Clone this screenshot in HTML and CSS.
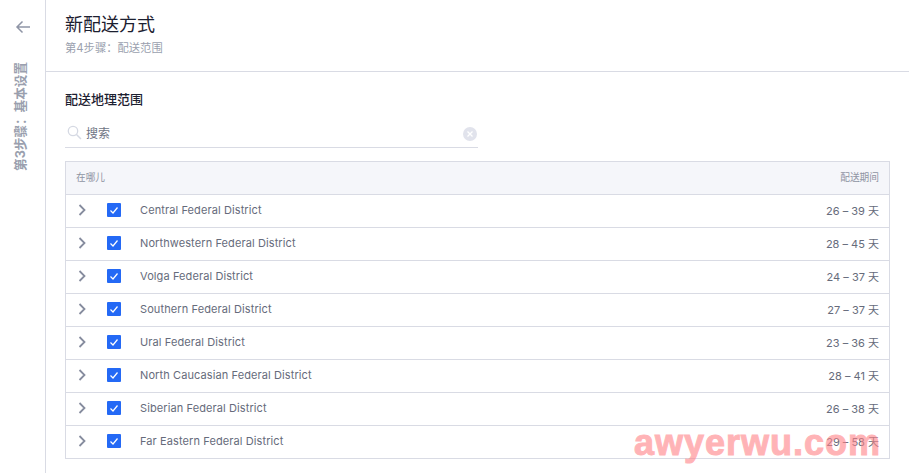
FILE: index.html
```html
<!DOCTYPE html>
<html lang="zh">
<head>
    <meta charset="UTF-8">
    <title>新配送方式</title>
    <link rel="stylesheet" href="styles.css">
</head>
<body>
    <aside class="side">
        <svg class="back" width="16" height="14" viewBox="0 0 16 14"><path d="M15 7H2M7.500 1.500 2 7l5.500 5.500" fill="none" stroke="#8f95a6" stroke-width="1.500"/></svg>
        <div class="step">第3步骤：基本设置</div>
    </aside>
    <main class="main">
        <header class="head">
            <h1 class="title">新配送方式</h1>
            <p class="sub">第4步骤：配送范围</p>
        </header>
        <section class="content">
            <h2 class="label">配送地理范围</h2>
            <div class="search">
                <svg width="15" height="15" viewBox="0 0 15 15"><circle cx="6" cy="6" r="4.700" fill="none" stroke="#d5d9e3" stroke-width="1.300"/><path d="M9.500 9.500 14 14" stroke="#d5d9e3" stroke-width="1.500"/></svg>
                <span class="search_text">搜索</span>
                <svg class="clear" width="14" height="14" viewBox="0 0 14 14"><circle cx="7" cy="7" r="7" fill="#e1e3ec"/><path d="M4.500 4.500l5 5M9.500 4.500l-5 5" stroke="#fff" stroke-width="1.300"/></svg>
            </div>
            <div class="table">
                <div class="row row_head"><span>在哪儿</span><span>配送期间</span></div>
                <div class="row">
                    <svg class="arrow" width="8" height="12" viewBox="0 0 8 12"><path d="M1.500 1 6.500 6l-5 5" fill="none" stroke="#868c9e" stroke-width="1.800"/></svg>
                    <svg class="check" width="14" height="14" viewBox="0 0 14 14"><rect width="14" height="14" rx="1" fill="#2469f5"/><path d="M3.500 7.500 6 10l4.500-5.500" fill="none" stroke="#fff" stroke-width="1.200"/></svg>
                    <span class="name">Central Federal District</span><span class="days">26 – 39 天</span>
                </div>
                <div class="row">
                    <svg class="arrow" width="8" height="12" viewBox="0 0 8 12"><path d="M1.500 1 6.500 6l-5 5" fill="none" stroke="#868c9e" stroke-width="1.800"/></svg>
                    <svg class="check" width="14" height="14" viewBox="0 0 14 14"><rect width="14" height="14" rx="1" fill="#2469f5"/><path d="M3.500 7.500 6 10l4.500-5.500" fill="none" stroke="#fff" stroke-width="1.200"/></svg>
                    <span class="name">Northwestern Federal District</span><span class="days">28 – 45 天</span>
                </div>
                <div class="row">
                    <svg class="arrow" width="8" height="12" viewBox="0 0 8 12"><path d="M1.500 1 6.500 6l-5 5" fill="none" stroke="#868c9e" stroke-width="1.800"/></svg>
                    <svg class="check" width="14" height="14" viewBox="0 0 14 14"><rect width="14" height="14" rx="1" fill="#2469f5"/><path d="M3.500 7.500 6 10l4.500-5.500" fill="none" stroke="#fff" stroke-width="1.200"/></svg>
                    <span class="name">Volga Federal District</span><span class="days">24 – 37 天</span>
                </div>
                <div class="row">
                    <svg class="arrow" width="8" height="12" viewBox="0 0 8 12"><path d="M1.500 1 6.500 6l-5 5" fill="none" stroke="#868c9e" stroke-width="1.800"/></svg>
                    <svg class="check" width="14" height="14" viewBox="0 0 14 14"><rect width="14" height="14" rx="1" fill="#2469f5"/><path d="M3.500 7.500 6 10l4.500-5.500" fill="none" stroke="#fff" stroke-width="1.200"/></svg>
                    <span class="name">Southern Federal District</span><span class="days">27 – 37 天</span>
                </div>
                <div class="row">
                    <svg class="arrow" width="8" height="12" viewBox="0 0 8 12"><path d="M1.500 1 6.500 6l-5 5" fill="none" stroke="#868c9e" stroke-width="1.800"/></svg>
                    <svg class="check" width="14" height="14" viewBox="0 0 14 14"><rect width="14" height="14" rx="1" fill="#2469f5"/><path d="M3.500 7.500 6 10l4.500-5.500" fill="none" stroke="#fff" stroke-width="1.200"/></svg>
                    <span class="name">Ural Federal District</span><span class="days">23 – 36 天</span>
                </div>
                <div class="row">
                    <svg class="arrow" width="8" height="12" viewBox="0 0 8 12"><path d="M1.500 1 6.500 6l-5 5" fill="none" stroke="#868c9e" stroke-width="1.800"/></svg>
                    <svg class="check" width="14" height="14" viewBox="0 0 14 14"><rect width="14" height="14" rx="1" fill="#2469f5"/><path d="M3.500 7.500 6 10l4.500-5.500" fill="none" stroke="#fff" stroke-width="1.200"/></svg>
                    <span class="name">North Caucasian Federal District</span><span class="days">28 – 41 天</span>
                </div>
                <div class="row">
                    <svg class="arrow" width="8" height="12" viewBox="0 0 8 12"><path d="M1.500 1 6.500 6l-5 5" fill="none" stroke="#868c9e" stroke-width="1.800"/></svg>
                    <svg class="check" width="14" height="14" viewBox="0 0 14 14"><rect width="14" height="14" rx="1" fill="#2469f5"/><path d="M3.500 7.500 6 10l4.500-5.500" fill="none" stroke="#fff" stroke-width="1.200"/></svg>
                    <span class="name">Siberian Federal District</span><span class="days">26 – 38 天</span>
                </div>
                <div class="row">
                    <svg class="arrow" width="8" height="12" viewBox="0 0 8 12"><path d="M1.500 1 6.500 6l-5 5" fill="none" stroke="#868c9e" stroke-width="1.800"/></svg>
                    <svg class="check" width="14" height="14" viewBox="0 0 14 14"><rect width="14" height="14" rx="1" fill="#2469f5"/><path d="M3.500 7.500 6 10l4.500-5.500" fill="none" stroke="#fff" stroke-width="1.200"/></svg>
                    <span class="name">Far Eastern Federal District</span><span class="days">29 – 58 天</span>
                </div>
            </div>
        </section>
    </main>
    <div class="watermark">awyerwu.com</div>
</body>
</html>
```
FILE: styles.css
```css
* {
    box-sizing: border-box;
}
html, body {
    height: 100%;
    overflow: hidden;
}
body {
    margin: 0;
    display: flex;
    font-family: Inter, "Noto Sans CJK SC", sans-serif;
    color: #666b7b;
    background-color: #fff;
}
.side {
    width: 46px;
    flex: none;
    border-right: 1px solid #d9dbe4;
    display: flex;
    flex-direction: column;
    align-items: center;
    padding-top: 20px;
}
.back {
    margin-bottom: 28px;
}
.step {
    margin-right: 4px;
    writing-mode: vertical-rl;
    text-orientation: sideways;
    transform: rotate(180deg);
    font-size: 12.600px;
    line-height: 16px;
    font-weight: 700;
    color: #9a9fae;
}
.main {
    flex: 1;
    min-width: 0;
}
.head {
    height: 72px;
    padding: 13px 19px 0;
    border-bottom: 1px solid #d9dbe4;
}
.title {
    margin: 0;
    font-size: 18px;
    line-height: 24px;
    font-weight: 400;
    color: #1c2030;
}
.sub {
    margin: 3px 0 0;
    font-size: 11.300px;
    line-height: 16px;
    color: #9a9fae;
}
.content {
    padding: 19px 19px 0;
}
.label {
    margin: 0;
    font-size: 13px;
    line-height: 17px;
    font-weight: 500;
    color: #1c2030;
}
.search {
    width: 413px;
    height: 32px;
    margin-top: 8px;
    padding: 2px 1px 0 2px;
    display: flex;
    align-items: center;
    border-bottom: 1px solid #d9dbe4;
}
.search_text {
    margin-left: 4px;
    font-size: 12px;
    color: #6f7484;
}
.clear {
    margin-left: auto;
    margin-top: 3px;
}
.table {
    width: 825px;
    margin-top: 13px;
    border: 1px solid #d9dbe4;
    border-bottom: 0;
}
.row {
    height: 33px;
    padding: 0 10px 2px 12px;
    display: flex;
    align-items: center;
    border-bottom: 1px solid #d9dbe4;
    font-size: 11px;
}
.row_head {
    padding-left: 10px;
    justify-content: space-between;
    background-color: #f5f6fa;
    font-size: 9.700px;
    color: #8f94a3;
}
.arrow {
    flex: none;
}
.check {
    flex: none;
    margin-left: 21px;
}
.name {
    margin-left: 19px;
    letter-spacing: 0.1px;
}
.days {
    margin-left: auto;
}
.watermark {
    position: absolute;
    left: 634px;
    top: 418px;
    font-family: "Liberation Sans", sans-serif;
    font-size: 36px;
    line-height: 50px;
    font-weight: 700;
    letter-spacing: 1px;
    color: #ff8287;
    -webkit-text-stroke: 1px #ff8287;
    opacity: 0.6;
    pointer-events: none;
}
```
